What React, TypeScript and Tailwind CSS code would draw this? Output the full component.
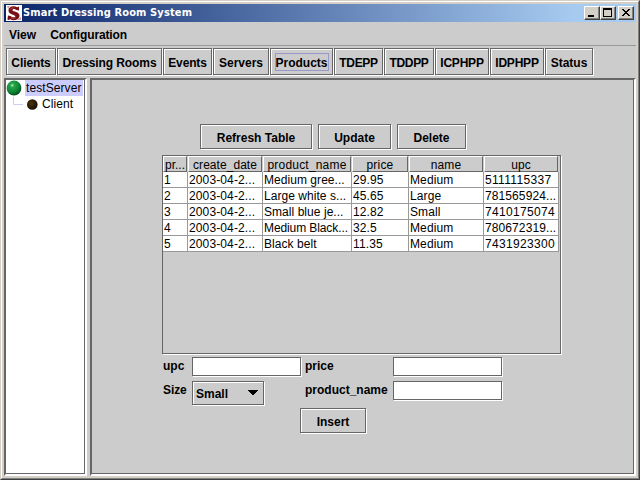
import React from "react";

const etched = "border border-[#666] shadow-[inset_1px_1px_0_#fff,1px_1px_0_#fff]";

const tabs = [
  { label: "Clients", cls: "w-[50px] tracking-[-0.1px]" },
  { label: "Dressing Rooms", cls: "w-[105px] tracking-[-0.1px]" },
  { label: "Events", cls: "w-[49px] tracking-[-0.15px]" },
  { label: "Servers", cls: "w-[56px]" },
  { label: "Products", cls: "w-[63px]", focused: true },
  { label: "TDEPP", cls: "w-[49px] tracking-[-0.3px]" },
  { label: "TDDPP", cls: "w-[50px] tracking-[-0.3px]" },
  { label: "ICPHPP", cls: "w-[54px] tracking-[-0.2px]" },
  { label: "IDPHPP", cls: "w-[54px] tracking-[-0.2px]" },
  { label: "Status", cls: "w-[48px]" },
];

const columns = ["pr...", "create_date", "product_name", "price", "name", "upc"];

const rows = [
  ["1", "2003-04-2...", "Medium gree...", "29.95", "Medium", "5111115337"],
  ["2", "2003-04-2...", "Large white s...", "45.65", "Large", "781565924..."],
  ["3", "2003-04-2...", "Small blue je...", "12.82", "Small", "7410175074"],
  ["4", "2003-04-2...", "Medium Black...", "32.5", "Medium", "780672319..."],
  ["5", "2003-04-2...", "Black belt", "11.35", "Medium", "7431923300"],
];

const headerTracking = [
  "tracking-normal",
  "tracking-[0.05px]",
  "tracking-[0.2px]",
  "tracking-[0.2px]",
  "tracking-[0.1px]",
  "tracking-normal",
];

function cellTracking(column: number, value: string) {
  if (column === 2) return value.startsWith("Medium B") ? "tracking-[-0.1px]" : "tracking-[0.05px]";
  if (column === 5) return value.endsWith("...") ? "tracking-[0.1px]" : "tracking-[0.33px]";
  return "tracking-[0.12px]";
}

const grid = "grid grid-cols-[25px_75px_89px_57px_75px_75px]";

function WindowButton({ children, className = "" }: { children: React.ReactNode; className?: string }) {
  return (
    <button
      className={`h-[14px] w-4 border border-t-white border-l-white border-r-[#404040] border-b-[#404040] bg-[#d4d0c8] shadow-[inset_-1px_-1px_0_#808080] ${className}`}
    >
      <svg width="14" height="12" viewBox="0 0 14 12" shapeRendering="crispEdges" className="block">
        {children}
      </svg>
    </button>
  );
}

function TitleBar() {
  return (
    <header className="flex h-[18px] shrink-0 bg-linear-to-r/srgb from-[#0a246a] to-[#a6caf0] to-90% px-[2px]">
      <svg width="16" height="16" viewBox="0 0 16 16" className="mt-px shrink-0 bg-white">
        <path d="M1 1h3L2 4zM11 15l4-3v3zM1 11l3 4H1z" fill="#c9a3a3" />
        <path
          d="M13 1.5v4L10.4 5C8.500 3.400 6.300 4 6.600 5.400c.4 1.200 6.800 1 6.900 5.100C13.500 15.500 7 16 4.500 14.200L2 15v-4.500l2.500.5c2 2 4.900 1.500 4.800.3C9 9.800 2.500 9.800 2.500 5.600 2.500 1 8.500.4 11 2.200z"
          fill="#780f16"
        />
        <path d="M4.300 4.500c.8-1.600 2.700-1.800 4-1.400M5 12.700c1.500.9 3.500.9 4.800-.1" fill="none" stroke="#ad4850" />
      </svg>
      <h1 className="ml-[1px] flex-1 font-['DejaVu_Sans_Condensed','DejaVu_Sans',sans-serif] text-[11px] leading-[18px] font-bold tracking-[0.12px] whitespace-nowrap text-white">
        Smart Dressing Room System
      </h1>
      <div className="mt-[2px] flex">
        <WindowButton>
          <rect x="3" y="8" width="6" height="2" fill="#000" />
        </WindowButton>
        <WindowButton>
          <path d="M2 1h9v9H2zM3 3v6h7V3z" fillRule="evenodd" fill="#000" />
        </WindowButton>
        <WindowButton className="ml-[2px]">
          <path
            d="M3 2h2v1h1v1h2v-1h1v-1h2v1h-1v1h-1v1h-1v1h1v1h1v1h1v1h-2v-1h-1v-1h-2v1h-1v1h-2v-1h1v-1h1v-1h1v-1h-1v-1h-1v-1h-1z"
            fill="#000"
          />
        </WindowButton>
      </div>
    </header>
  );
}

function ActionButton({ label, className }: { label: string; className: string }) {
  return (
    <button className={`mr-px mb-px flex h-[25px] justify-center pt-[5px] leading-4 font-bold ${etched} ${className}`}>
      {label}
    </button>
  );
}

function TextField() {
  return <input className="mr-px block h-[19px] w-[109px] border border-[#666] bg-white shadow-[1px_1px_0_#fff] outline-none" />;
}

function Tree() {
  return (
    <aside className="flex w-[83px] border border-t-[#666] border-l-[#666] border-r-white border-b-white">
      <div className="mr-px mb-px flex flex-1 border border-[#666] bg-white shadow-[1px_1px_0_#fff]">
        <svg width="19" height="34" viewBox="0 0 19 34" className="shrink-0 overflow-visible">
          <defs>
            <radialGradient id="green" cx="0.38" cy="0.32" r="0.68">
              <stop offset="0" stopColor="#b5efc0" />
              <stop offset="0.2" stopColor="#27a64c" />
              <stop offset="0.7" stopColor="#0b8434" />
              <stop offset="1" stopColor="#034d1c" />
            </radialGradient>
            <radialGradient id="brown" cx="0.4" cy="0.4" r="0.6">
              <stop offset="0" stopColor="#4a3510" />
              <stop offset="0.6" stopColor="#2e1d06" />
              <stop offset="1" stopColor="#1c1206" />
            </radialGradient>
          </defs>
          <path d="M7.5 17v7.5H17" fill="none" stroke="#ccccee" />
          <circle cx="8" cy="8" r="7.4" fill="url(#green)" />
          <circle cx="26.3" cy="24.5" r="5.3" fill="url(#brown)" />
        </svg>
        <ul className="leading-4 whitespace-nowrap">
          <li className="w-[58px] bg-[#ccccff] pl-px tracking-[0.08px]">testServer</li>
          <li className="pl-[17px] tracking-[0.1px]">Client</li>
        </ul>
      </div>
    </aside>
  );
}

function ProductTable() {
  return (
    <section className="mr-px h-[199px] w-[399px] border border-[#666] shadow-[1px_1px_0_#fff]">
      <div className={`${grid} w-[396px]`}>
        {columns.map((name, i) => (
          <div
            key={name}
            className={`mr-px h-4 border border-t-white border-l-white border-r-[#666] border-b-[#666] text-center leading-4 whitespace-nowrap ${headerTracking[i]}`}
          >
            {name}
          </div>
        ))}
      </div>
      {rows.map((row) => (
        <div key={row[0]} className={`${grid} w-[396px]`}>
          {row.map((value, i) => (
            <div
              key={i}
              className={`h-4 overflow-hidden border-r border-b border-[#999] bg-white pl-px leading-4 whitespace-nowrap ${cellTracking(i, value)}`}
            >
              {value}
            </div>
          ))}
        </div>
      ))}
    </section>
  );
}

function ProductForm() {
  return (
    <form className="mt-[3px] leading-4 font-bold">
      <div className="grid grid-cols-[30px_113px_88px_110px]">
        <label className="pt-px pl-px">upc</label>
        <TextField />
        <label className="pt-px">price</label>
        <TextField />
      </div>
      <div className="mt-[5px] grid h-[24px] grid-cols-[30px_113px_88px_110px]">
        <label className="pt-px pl-px tracking-[-0.1px]">Size</label>
        <div className={`flex h-6 w-[72px] justify-between pt-1 pl-[3px] ${etched}`}>
          <span>Small</span>
          <svg width="10" height="5" viewBox="0 0 10 5" shapeRendering="crispEdges" className="mt-1 mr-[5px]">
            <path d="M0 0h10v1H9v1H8v1H7v1H6v1H4V4H3V3H2V2H1V1H0z" />
          </svg>
        </div>
        <label className="pt-px">product_name</label>
        <TextField />
      </div>
      <div className="mt-[3px] ml-[138px] flex">
        <ActionButton label="Insert" className="w-[66px]" />
      </div>
    </form>
  );
}

export default function App() {
  return (
    <div className="h-[480px] w-[640px] overflow-hidden border border-t-[#d4d0c8] border-l-[#d4d0c8] border-r-[#404040] border-b-[#404040] font-['Liberation_Sans',Arial,sans-serif] text-[12px] text-black">
      <div className="flex h-full flex-col border border-t-white border-l-white border-r-[#808080] border-b-[#808080] bg-[#d4d0c8] p-[2px]">
        <TitleBar />
        <div className="flex flex-1 flex-col bg-[#ccc]">
          <nav className="flex h-6 shrink-0 gap-[14px] border-b border-[#999] pt-[5px] pl-[5px] leading-4 font-bold">
            <span>View</span>
            <span className="tracking-[-0.15px]">Configuration</span>
          </nav>
          <div className="flex h-8 shrink-0 pt-[2px] pl-[2px]">
            {tabs.map((tab) => (
              <button
                key={tab.label}
                className={`relative mr-px flex h-[27px] shrink-0 justify-center pt-[6px] leading-4 font-bold whitespace-nowrap ${etched} ${tab.cls}`}
              >
                {tab.label}
                {tab.focused && <span className="absolute top-1 left-1 h-[18px] w-[54px] border border-[#9999cc]" />}
              </button>
            ))}
          </div>
          <div className="flex flex-1 gap-[3px]">
            <Tree />
            <div className="flex flex-1 border border-t-[#666] border-l-[#666] border-r-white border-b-white">
              <main className="mr-px mb-px flex-1 border border-[#666] pt-[44px] pl-[70px] shadow-[1px_1px_0_#fff]">
                <div className="mb-[5px] ml-[38px] flex gap-[5px]">
                  <ActionButton label="Refresh Table" className="w-[112px]" />
                  <ActionButton label="Update" className="w-[73px]" />
                  <ActionButton label="Delete" className="w-[69px]" />
                </div>
                <ProductTable />
                <ProductForm />
              </main>
            </div>
          </div>
        </div>
      </div>
    </div>
  );
}
